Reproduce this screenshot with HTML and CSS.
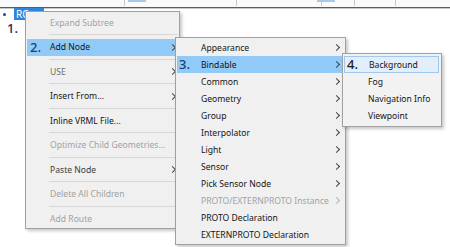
FILE: index.html
```html
<!DOCTYPE html>
<html lang="en">
<head>
  <meta charset="UTF-8">
  <meta name="viewport" content="width=device-width, initial-scale=1.0">
  <title>Scene Tree</title>
  <link rel="stylesheet" href="styles.css">
</head>
<body>
  <div class="columns">
    <div class="col" style="width:125px"></div>
    <div class="col" style="width:112px"><span class="tab"></span></div>
    <div class="col" style="width:85px"><span class="tab tab-end"></span></div>
    <div class="col" style="width:33px"></div>
    <div class="col" style="width:41px"></div>
    <div class="col last"></div>
  </div>
  <ul class="tree">
    <li><span class="node">RO</span></li>
  </ul>
  <span class="step step-tree">1.</span>

  <div class="menu menu-main">
    <div class="item off"><span class="gutter"></span>Expand Subtree</div>
    <div class="sep"></div>
    <div class="item active sub"><span class="gutter"><span class="step">2.</span></span>Add Node</div>
    <div class="sep"></div>
    <div class="item dim sub"><span class="gutter"></span>USE</div>
    <div class="sep"></div>
    <div class="item sub"><span class="gutter"></span>Insert From...</div>
    <div class="sep"></div>
    <div class="item"><span class="gutter"></span>Inline VRML File...</div>
    <div class="sep"></div>
    <div class="item off"><span class="gutter"></span>Optimize Child Geometries...</div>
    <div class="sep"></div>
    <div class="item paste sub"><span class="gutter"></span>Paste Node</div>
    <div class="sep"></div>
    <div class="item off"><span class="gutter"></span>Delete All Children</div>
    <div class="sep"></div>
    <div class="item off"><span class="gutter"></span>Add Route</div>
  </div>

  <div class="menu menu-add">
    <div class="item sub"><span class="gutter"></span>Appearance</div>
    <div class="item active sub"><span class="gutter"><span class="step">3.</span></span>Bindable</div>
    <div class="item sub"><span class="gutter"></span>Common</div>
    <div class="item sub"><span class="gutter"></span>Geometry</div>
    <div class="item sub"><span class="gutter"></span>Group</div>
    <div class="item sub"><span class="gutter"></span>Interpolator</div>
    <div class="item sub"><span class="gutter"></span>Light</div>
    <div class="item sub"><span class="gutter"></span>Sensor</div>
    <div class="item sub"><span class="gutter"></span>Pick Sensor Node</div>
    <div class="item off sub"><span class="gutter"></span>PROTO/EXTERNPROTO Instance</div>
    <div class="item"><span class="gutter"></span>PROTO Declaration</div>
    <div class="item"><span class="gutter"></span>EXTERNPROTO Declaration</div>
  </div>

  <div class="menu menu-bind">
    <div class="item hover"><span class="gutter"><span class="step dark">4.</span></span>Background</div>
    <div class="item"><span class="gutter"></span>Fog</div>
    <div class="item"><span class="gutter"></span>Navigation Info</div>
    <div class="item"><span class="gutter"></span>Viewpoint</div>
  </div>
</body>
</html>
```

FILE: styles.css
```css
* { box-sizing: border-box; }
body { margin: 0; width: 450px; height: 247px; overflow: hidden; background: #fff; font-family: "Noto Sans", "Open Sans", sans-serif; position: relative; }

/* column header strip */
.columns { display: flex; height: 8px; background: #fafafa; border-bottom: 1px solid #5c5c5c; box-shadow: 0 1px 0 #c8c8c8; }
.col { height: 6px; border-right: 1px solid #c9c9c9; position: relative; }
.col.last { flex: 1; border-right: none; }
.tab { display: block; width: 18px; height: 2px; margin-left: 3px; background: #a9c9e8; }
.tab-end { margin-left: 80px; }

/* tree */
.tree { list-style: none; margin: 0; padding: 0 0 0 3px; }
.tree li { display: flex; align-items: center; height: 12px; }
.tree li::before { content: ""; width: 3px; height: 3px; border-radius: 50%; background: #2342a0; margin-right: 8px; }
.node { background: #2e86dc; color: #fff; font-size: 10px; line-height: 12px; padding: 0 14px 0 2px; }

.step { font-size: 13px; line-height: 1; color: #1b3f74; font-weight: 500; }
.step.dark { color: #1c1c1c; }
.step-tree { position: absolute; left: 7px; top: 22px; color: #1c2a48; }

/* context menus */
.menu { position: absolute; background: #f0f0f0; border: 1px solid #a0a0a0; box-shadow: 2px 2px 3px rgba(0, 0, 0, 0.22); font-size: 8.6px; color: #141414; }
.menu-main { left: 25px; top: 11px; width: 155px; padding: 2px 1px 1px; }
.menu-add { left: 175px; top: 37px; width: 171px; padding: 1px 1px; }
.menu-bind { left: 342px; top: 53px; width: 100px; padding: 2px 1px; background: #f2f2f2; }

.item { display: flex; align-items: center; height: 17px; white-space: nowrap; }
.gutter { width: 23px; flex: none; padding-left: 3px; display: flex; align-items: center; }
.menu-add .gutter, .menu-bind .gutter { width: 24px; padding-left: 2px; }
.item.sub::after { content: ""; margin-left: auto; margin-right: 5px; width: 4px; height: 4px; border-top: 1px solid #444; border-right: 1px solid #444; transform: rotate(45deg); }
.menu-main .item.sub::after { margin-right: 3px; }
.item.active { background: #91c9f7; }
.item.hover { background: #e2eefa; border: 1px solid #9ec8ee; margin-right: 1px; }
.item.off { color: #a2a2a2; }
.item.off.sub::after { border-color: #b4b4b4; }
.item.dim { color: #6e6e6e; }
.item.paste { color: #3c3c3c; }

.sep { height: 1px; background: #d7d7d7; margin: 3px 0 3.5px 22px; }
```
